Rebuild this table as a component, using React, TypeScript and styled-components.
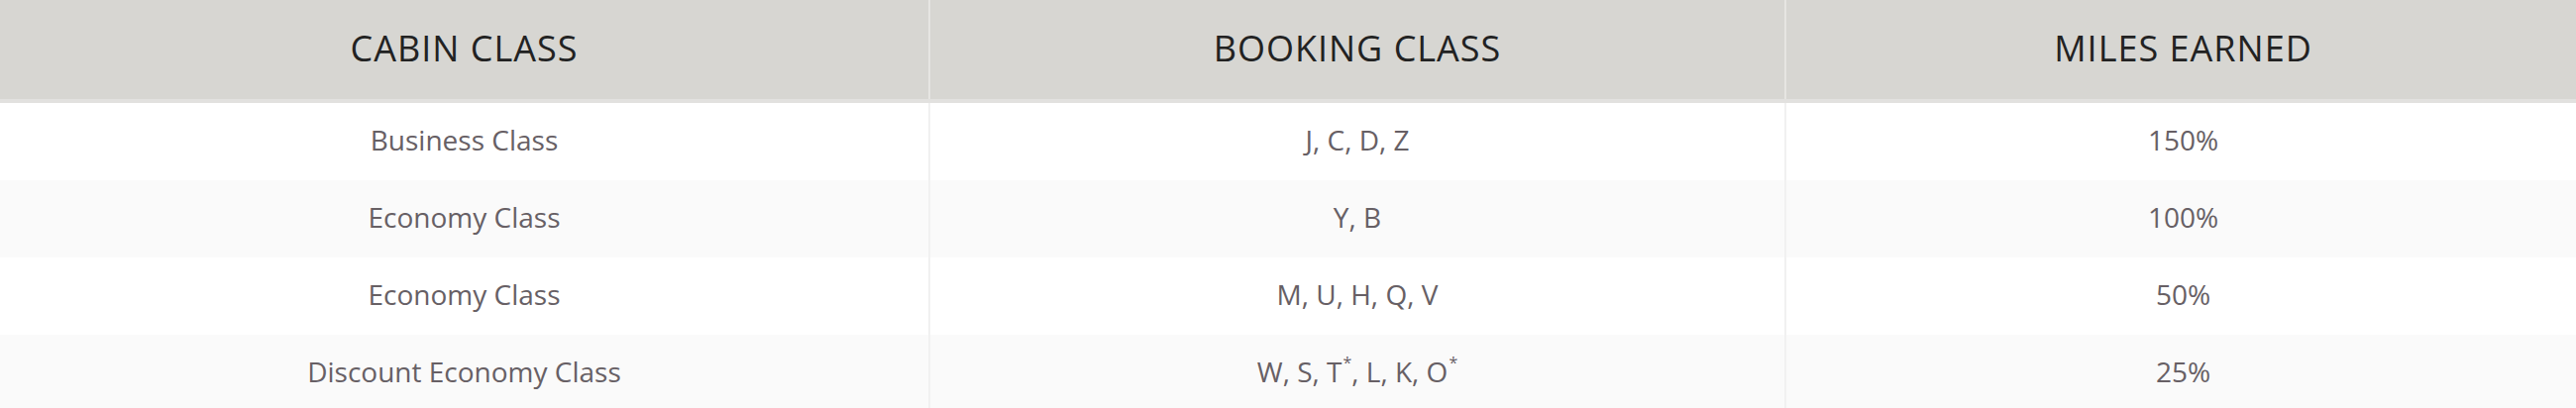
import styled, { createGlobalStyle } from "styled-components";

const GlobalStyle = createGlobalStyle`
  html, body {
    margin: 0;
    padding: 0;
    background: #ffffff;
    font-family: "Open Sans", "Noto Sans", sans-serif;
  }
`;

const Table = styled.table`
  width: 2600px;
  border-collapse: collapse;
  table-layout: fixed;
`;

const HeadCell = styled.th<{ $w: number }>`
  width: ${(p) => p.$w}px;
  height: 97px;
  padding: 0 0 3px;
  background: #d7d6d2;
  color: #222222;
  font-size: 36px;
  font-weight: 400;
  letter-spacing: 1px;
  text-align: center;
  border-bottom: 4px solid #e2e1df;
  border-left: 2px solid #e6e5e2;
  &:first-child {
    border-left: none;
  }
`;

const Row = styled.tr<{ $alt: boolean }>`
  background: ${(p) => (p.$alt ? "#fafafa" : "#ffffff")};
`;

const Cell = styled.td`
  height: 74px;
  padding: 0 0 4px;
  color: #676065;
  font-size: 28px;
  font-weight: 500;
  text-align: center;
  border-left: 2px solid #f1f1f1;
  &:first-child {
    border-left: none;
  }
`;

const Star = styled.sup`
  font-size: 16px;
  vertical-align: 14px;
  line-height: 0;
  margin-left: 1px;
`;

const rows: { cabin: string; booking: React.ReactNode; miles: string }[] = [
  { cabin: "Business Class", booking: "J, C, D, Z", miles: "150%" },
  { cabin: "Economy Class", booking: "Y, B", miles: "100%" },
  { cabin: "Economy Class", booking: "M, U, H, Q, V", miles: "50%" },
  {
    cabin: "Discount Economy Class",
    booking: (
      <>
        W, S, T<Star>*</Star>, L, K, O<Star>*</Star>
      </>
    ),
    miles: "25%",
  },
];

const App = (): JSX.Element => (
  <>
    <GlobalStyle />
    <Table>
      <thead>
        <tr>
          <HeadCell $w={937}>CABIN CLASS</HeadCell>
          <HeadCell $w={862}>BOOKING CLASS</HeadCell>
          <HeadCell $w={801}>MILES EARNED</HeadCell>
        </tr>
      </thead>
      <tbody>
        {rows.map((r, i) => (
          <Row key={i} $alt={i % 2 === 1}>
            <Cell>{r.cabin}</Cell>
            <Cell>{r.booking}</Cell>
            <Cell>{r.miles}</Cell>
          </Row>
        ))}
      </tbody>
    </Table>
  </>
);

export default App;
